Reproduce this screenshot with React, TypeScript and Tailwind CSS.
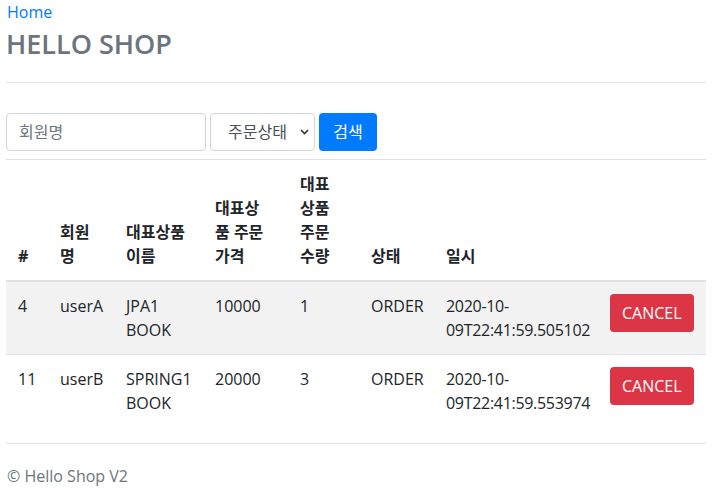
import React from 'react';

const orders = [
  { id: 4, member: 'userA', item: ['JPA1', 'BOOK'], price: 10000, count: 1, status: 'ORDER', date: ['2020-10-', '09T22:41:59.505102'] },
  { id: 11, member: 'userB', item: ['SPRING1', 'BOOK'], price: 20000, count: 3, status: 'ORDER', date: ['2020-10-', '09T22:41:59.553974'] },
];

const headers: { lines: string[]; w: string }[] = [
  { lines: ['#'], w: 'w-[42px]' },
  { lines: ['회원', '명'], w: 'w-[66px]' },
  { lines: ['대표상품', '이름'], w: 'w-[89px]' },
  { lines: ['대표상', '품 주문', '가격'], w: 'w-[85px]' },
  { lines: ['대표', '상품', '주문', '수량'], w: 'w-[71px]' },
  { lines: ['상태'], w: 'w-[75px]' },
  { lines: ['일시'], w: 'w-[164px]' },
  { lines: [''], w: 'w-[108px]' },
];

const App: React.FC = () => {
  return (
    <div
      className="min-h-screen bg-white text-[16px] leading-[24px] text-[#212529]"
      style={{ fontFamily: '"Open Sans", "Noto Sans CJK KR", sans-serif' }}
    >
      <div className="px-[6px]">
        {/* header */}
        <div className="border-b border-[#e3e3e3] pb-[21px]">
          <a href="#" className="block text-[#007bff] leading-[24px] pl-px">Home</a>
          <h3 className="mt-[3px] text-[27px] leading-[34px] font-semibold text-[#6c757d]">HELLO SHOP</h3>
        </div>

        {/* search form */}
        <form className="mt-[30px] mb-[8px] flex items-center gap-[4px]">
          <input
            type="text"
            placeholder="회원명"
            className="w-[200px] h-[38px] px-[12px] border border-[#ced4da] rounded-[4px] outline-none placeholder:text-[#6c757d]"
          />
          <div className="relative">
            <select className="appearance-none w-[105px] h-[38px] pl-[17px] pr-[20px] border border-[#ced4da] rounded-[4px] bg-white text-[#495057] outline-none">
              <option>주문상태</option>
              <option>ORDER</option>
              <option>CANCEL</option>
            </select>
            <svg className="absolute right-[6px] top-[16px] w-[9px] h-[6px] pointer-events-none" viewBox="0 0 9 6" fill="none">
              <path d="M1 1l3.5 3.5L8 1" stroke="#333" strokeWidth={1.6} />
            </svg>
          </div>
          <button type="button" className="h-[38px] w-[58px] rounded-[4px] bg-[#007bff] text-white">검색</button>
        </form>

        {/* order table */}
        <table className="w-[700px] table-fixed border-collapse mb-[16px]">
          <thead>
            <tr>
              {headers.map((h, i) => (
                <th key={i} className={`${h.w} px-[12px] py-[12px] align-bottom text-left font-bold border-t border-[#dee2e6] border-b-2`}>
                  {h.lines.map((l, j) => (
                    <div key={j} className="whitespace-nowrap">{l}</div>
                  ))}
                </th>
              ))}
            </tr>
          </thead>
          <tbody>
            {orders.map((o, i) => (
              <tr key={o.id} className={i % 2 === 0 ? 'bg-[#f2f2f2]' : ''}>
                <td className="p-[12px] align-top border-t border-[#dee2e6]">{o.id}</td>
                <td className="p-[12px] align-top border-t border-[#dee2e6]">{o.member}</td>
                <td className="p-[12px] align-top border-t border-[#dee2e6]">
                  {o.item[0]}<br />{o.item[1]}
                </td>
                <td className="p-[12px] align-top border-t border-[#dee2e6]">{o.price}</td>
                <td className="p-[12px] align-top border-t border-[#dee2e6]">{o.count}</td>
                <td className="p-[12px] align-top border-t border-[#dee2e6]">{o.status}</td>
                <td className="p-[12px] align-top border-t border-[#dee2e6] whitespace-nowrap tracking-[-0.3px]">
                  {o.date[0]}<br />{o.date[1]}
                </td>
                <td className="p-[12px] align-top border-t border-[#dee2e6]">
                  <button type="button" className="h-[38px] px-[12px] rounded-[4px] bg-[#dc3545] text-white">CANCEL</button>
                </td>
              </tr>
            ))}
          </tbody>
        </table>

        {/* footer */}
        <div className="border-t border-[#e3e3e3] pt-[20px] text-[#6c757d]">
          <p className="pl-px">© Hello Shop V2</p>
        </div>
      </div>
    </div>
  );
};

export default App;
